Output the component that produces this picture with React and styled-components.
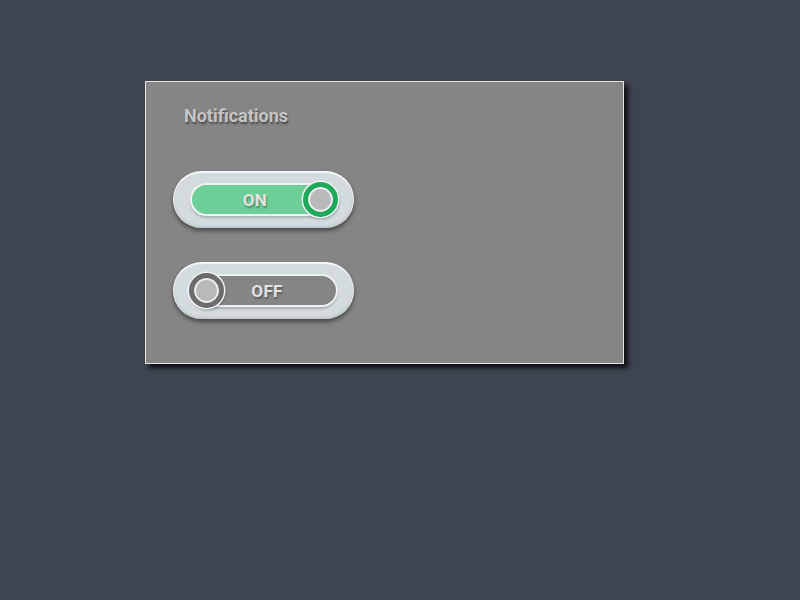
import React from "react";
import styled, { createGlobalStyle } from "styled-components";

const GlobalStyle = createGlobalStyle`
    html, body {
        margin: 0;
        padding: 0;
        height: 100%;
    }
    body {
        background: #3e4550;
        font-family: Roboto, "Liberation Sans", sans-serif;
    }
`;

const Page = styled.div`
    padding: 81px 0 0 145px;
`;

const Panel = styled.div`
    width: 477px;
    height: 281px;
    box-sizing: content-box;
    background: #858585;
    border: 1px solid #e4e4e4;
    box-shadow: 4px 4px 5px rgba(0, 0, 0, 0.8);
    display: flex;
    flex-direction: column;
`;

const Title = styled.h2`
    margin: 23px 0 0 38px;
    font-size: 18px;
    font-weight: 700;
    line-height: 22px;
    color: #c4c4c4;
    text-shadow: 1px 2px 2px rgba(0, 0, 0, 0.45);
`;

const List = styled.div`
    display: flex;
    flex-direction: column;
    gap: 34px;
    margin: 44px 0 0 27px;
`;

const Pill = styled.div`
    width: 181px;
    height: 57px;
    box-sizing: border-box;
    border-radius: 29px;
    background: #d3dbdf;
    border-top: 2px solid #f4f6f7;
    border-left: 1px solid #eef1f2;
    border-right: 1px solid #eef1f2;
    box-shadow: 0 3px 4px rgba(0, 0, 0, 0.45), inset 0 -2px 2px rgba(0, 0, 0, 0.08);
    padding: 10px 15px 0 16px;
`;

const Track = styled.div`
    position: relative;
    height: 33px;
    box-sizing: border-box;
    border-radius: 17px;
    background: ${(p) => (p.$on ? "#6dcf97" : "#858585")};
    border: 2px solid ${(p) => (p.$on ? "#eef2f0" : "#eef1f2")};
    box-shadow: 0 2px 2px rgba(0, 0, 0, 0.18);
    display: flex;
    align-items: center;
    justify-content: center;
    padding: ${(p) => (p.$on ? "0 18px 0 0" : "0 0 0 6px")};
`;

const Label = styled.span`
    font-size: 17px;
    font-weight: 700;
    color: #e2e2e2;
    letter-spacing: 0.3px;
    text-shadow: 1px 2px 2px rgba(0, 0, 0, 0.35);
`;

const Knob = styled.div`
    position: absolute;
    top: 50%;
    ${(p) => (p.$on ? "right: -2px;" : "left: -3px;")}
    width: 35px;
    height: 35px;
    box-sizing: border-box;
    margin-top: -17.5px;
    border-radius: 50%;
    border: 5px solid ${(p) => (p.$on ? "#1fa95a" : "#6c6c6c")};
    background: #b9b9b9;
    box-shadow: 0 0 0 1.5px #f2f2f2, 1px 2px 3px rgba(0, 0, 0, 0.35), inset 0 0 0 2px #ededed;
`;

const Toggle = ({ on }) => (
    <Pill>
        <Track $on={on}>
            <Label>{on ? "ON" : "OFF"}</Label>
            <Knob $on={on} />
        </Track>
    </Pill>
);

const App = () => (
    <React.Fragment>
        <GlobalStyle />
        <Page>
            <Panel>
                <Title>Notifications</Title>
                <List>
                    <Toggle on />
                    <Toggle on={false} />
                </List>
            </Panel>
        </Page>
    </React.Fragment>
);

export default App;
